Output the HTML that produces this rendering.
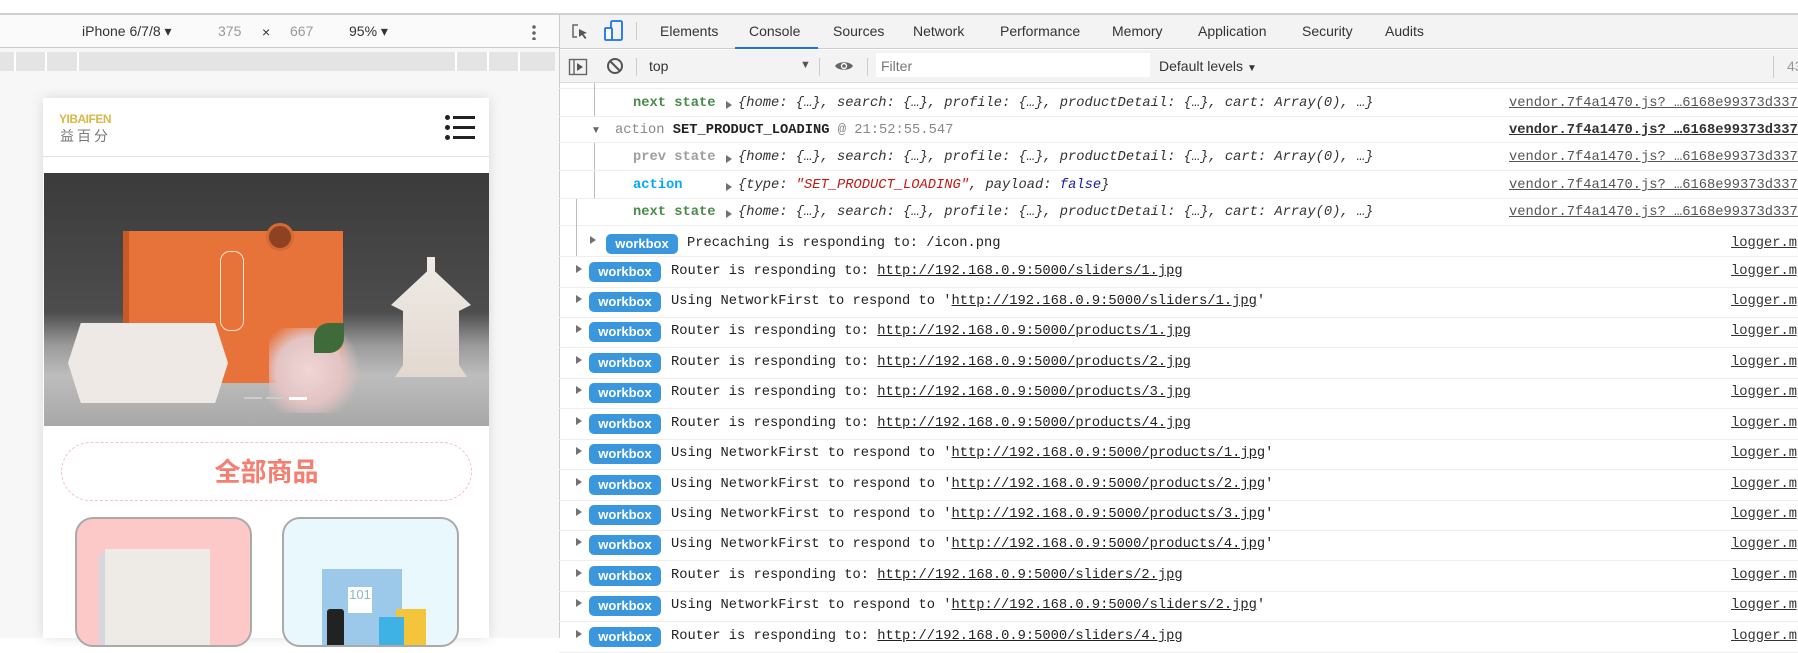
<!DOCTYPE html>
<html><head><meta charset="utf-8"><style>
*{margin:0;padding:0;box-sizing:border-box}
body{width:1798px;height:638px;overflow:hidden;background:#fff;position:relative;font-family:"Liberation Sans",sans-serif;font-size:13px;color:#333}
.a{position:absolute}
.mono{font-family:"Liberation Mono","DejaVu Sans Mono",monospace;font-size:13.75px;white-space:nowrap}
.tab{position:absolute;top:23px;font-size:14px;color:#333}
.row{position:absolute;left:559px;right:0;border-bottom:1px solid #eee}
.badge{position:absolute;height:20px;width:72px;background:#3a96dd;border-radius:5px;color:#fff;font-weight:bold;font-size:13px;line-height:20px;text-align:center;font-family:"Liberation Sans",sans-serif}
.tri{position:absolute;width:0;height:0;border-left:6px solid #727272;border-top:4px solid transparent;border-bottom:4px solid transparent}
.u{text-decoration:underline}
.it{font-style:italic}
.wr{position:absolute;left:559px;right:0;height:31px;border-bottom:1px solid #eee}
.wr .tri{left:17px;top:8px}
.wr .badge{left:30px;top:5px}
.wr .t{position:absolute;left:112px;top:7px;color:#222}
.wr .l{position:absolute;left:1172px;top:7px;color:#333}
</style></head><body>
<div class="a" style="left:0;top:0;width:1798px;height:13px;background:#fff"></div>
<div class="a" style="left:0;top:13px;width:1798px;height:2px;background:#d0d0d0"></div>
<div class="a" style="left:0;top:15px;width:559px;height:623px;background:#f7f7f7"></div>
<div class="a" style="left:0;top:15px;width:559px;height:33px;background:#fafafa;border-bottom:1px solid #ccc"></div>
<div class="a" style="left:82px;top:23px;font-size:14px;color:#333">iPhone 6/7/8 ▾</div>
<div class="a" style="left:218px;top:23px;font-size:14px;color:#999">375</div>
<div class="a" style="left:262px;top:24px;font-size:14px;color:#333">×</div>
<div class="a" style="left:290px;top:23px;font-size:14px;color:#999">667</div>
<div class="a" style="left:349px;top:23px;font-size:14px;color:#333">95% ▾</div>
<div class="a" style="left:532px;top:24px;width:4px;height:16px;background:radial-gradient(circle,#666 1.6px,transparent 2px) 0 0/4px 6px repeat-y"></div>
<div class="a" style="left:0;top:52px;width:555px;height:19px;background:#e4e4e4"></div>
<div class="a" style="left:14px;top:52px;width:2px;height:19px;background:#fff"></div>
<div class="a" style="left:45px;top:52px;width:2px;height:19px;background:#fff"></div>
<div class="a" style="left:77px;top:52px;width:2px;height:19px;background:#fff"></div>
<div class="a" style="left:455px;top:52px;width:2px;height:19px;background:#fff"></div>
<div class="a" style="left:487px;top:52px;width:2px;height:19px;background:#fff"></div>
<div class="a" style="left:518px;top:52px;width:2px;height:19px;background:#fff"></div>
<div class="a" style="left:43px;top:98px;width:446px;height:540px;background:#fff;box-shadow:0 0 12px rgba(0,0,0,.12)"></div>
<div class="a" style="left:59px;top:112px;font-size:12px;font-weight:bold;color:#d9b84a;letter-spacing:-0.5px">YIBAIFEN</div>
<div class="a" style="left:60px;top:126px;font-size:14px;color:#777;letter-spacing:3px;font-family:'Liberation Sans','Noto Sans CJK SC',sans-serif">益百分</div>
<div class="a" style="left:445px;top:115px;width:5px;height:5px;border-radius:50%;background:#222"></div>
<div class="a" style="left:445px;top:125px;width:5px;height:5px;border-radius:50%;background:#222"></div>
<div class="a" style="left:445px;top:135px;width:5px;height:5px;border-radius:50%;background:#222"></div>
<div class="a" style="left:453px;top:116px;width:22px;height:3px;background:#222"></div>
<div class="a" style="left:453px;top:126px;width:22px;height:3px;background:#222"></div>
<div class="a" style="left:453px;top:136px;width:22px;height:3px;background:#222"></div>
<div class="a" style="left:43px;top:156px;width:446px;height:1px;background:#e0e0e0"></div>
<div class="a" style="left:44px;top:173px;width:445px;height:253px;overflow:hidden;background:linear-gradient(180deg,#3b3b3b 0%,#4d4d4d 55%,#9a9a9a 68%,#bdbdbd 80%,#a8a8a8 100%)">
 <div class="a" style="left:85px;top:58px;width:214px;height:152px;background:#e8733a;box-shadow:-6px 0 0 #c85a26"></div>
 <div class="a" style="left:222px;top:50px;width:28px;height:28px;border-radius:50%;background:#8f4222;border:3px solid #d66a34"></div>
 <div class="a" style="left:176px;top:78px;width:24px;height:80px;border:1.5px solid #fbe1d0;border-radius:10px"></div>
 <div class="a" style="left:24px;top:150px;width:160px;height:80px;background:#efe9e6;clip-path:polygon(8% 0,92% 0,100% 50%,92% 100%,8% 100%,0 50%)"></div>
 <div class="a" style="left:225px;top:155px;width:100px;height:85px;background:radial-gradient(circle at 40% 50%,#f0d6d6 0,#e3c3c3 45%,transparent 70%)"></div>
 <div class="a" style="left:270px;top:150px;width:30px;height:30px;background:#3f6b3a;border-radius:50% 0"></div>
 <div class="a" style="left:347px;top:84px;width:80px;height:120px;background:linear-gradient(#f0ebe6,#e2d8d0);clip-path:polygon(45% 0,55% 0,55% 12%,100% 40%,85% 45%,85% 90%,95% 100%,5% 100%,15% 90%,15% 45%,0 40%,45% 12%)"></div>
 <div class="a" style="left:200px;top:224px;width:18px;height:2px;background:#ccc"></div>
 <div class="a" style="left:222px;top:224px;width:18px;height:2px;background:#ccc"></div>
 <div class="a" style="left:245px;top:224px;width:18px;height:3px;background:#fff"></div>
</div>
<div class="a" style="left:61px;top:442px;width:411px;height:59px;border:1px dashed #f3c2c2;border-radius:30px"></div>
<div class="a" style="left:61px;top:456px;width:411px;text-align:center;font-size:26px;font-weight:bold;color:#f47e70;font-family:'Liberation Sans','Noto Sans CJK SC',sans-serif;line-height:32px">全部商品</div>
<div class="a" style="left:75px;top:517px;width:177px;height:130px;border:2px solid #aaa;border-radius:18px;background:#fdc8c8;overflow:hidden">
 <div class="a" style="left:28px;top:30px;width:105px;height:100px;background:#eeeae6;box-shadow:-6px 4px 0 #d6d6de"></div>
</div>
<div class="a" style="left:282px;top:517px;width:177px;height:130px;border:2px solid #aaa;border-radius:18px;background:#e8f8fc;overflow:hidden">
 <div class="a" style="left:38px;top:50px;width:80px;height:80px;background:#9cc8ea"></div>
 <div class="a" style="left:64px;top:68px;width:24px;height:26px;background:#fff;color:#8bb;font-size:13px;text-align:center">101</div>
 <div class="a" style="left:112px;top:90px;width:30px;height:40px;background:#f4c53a"></div>
 <div class="a" style="left:95px;top:98px;width:25px;height:32px;background:#3fb2e5"></div>
 <div class="a" style="left:43px;top:90px;width:17px;height:40px;background:#222;border-radius:3px"></div>
</div>
<div class="a" style="left:559px;top:15px;width:1239px;height:623px;background:#fff;border-left:1px solid #ccc"></div>
<div class="a" style="left:560px;top:15px;width:1238px;height:34px;background:#f3f3f3;border-bottom:1px solid #ccc"></div>
<svg class="a" style="left:570px;top:22px" width="20" height="20" viewBox="0 0 20 20"><path d="M8 3H3v12h4" fill="none" stroke="#666" stroke-width="1.5"/><path d="M9 7l8 4-3.5 1 3 4-1.5 1-3-4L9 15z" fill="#555"/></svg>
<svg class="a" style="left:604px;top:20px" width="20" height="22" viewBox="0 0 20 22"><rect x="7" y="1" width="11" height="19" rx="1.5" fill="none" stroke="#1a73e8" stroke-width="1.8"/><rect x="1" y="8" width="7" height="12" rx="1" fill="#fff" stroke="#1a73e8" stroke-width="1.8"/></svg>
<div class="a" style="left:636px;top:22px;width:1px;height:18px;background:#ccc"></div>
<div class="tab" style="left:660px">Elements</div>
<div class="tab" style="left:749px">Console</div>
<div class="a" style="left:735px;top:47px;width:83px;height:2px;background:#1a73e8"></div>
<div class="tab" style="left:833px">Sources</div>
<div class="tab" style="left:913px">Network</div>
<div class="tab" style="left:1000px">Performance</div>
<div class="tab" style="left:1112px">Memory</div>
<div class="tab" style="left:1198px">Application</div>
<div class="tab" style="left:1302px">Security</div>
<div class="tab" style="left:1385px">Audits</div>
<div class="a" style="left:560px;top:50px;width:1238px;height:33px;background:#f3f3f3;border-bottom:1px solid #ddd"></div>
<svg class="a" style="left:568px;top:57px" width="20" height="20" viewBox="0 0 20 20"><rect x="1.5" y="2.5" width="17" height="15" fill="none" stroke="#666" stroke-width="1.4"/><line x1="6" y1="2.5" x2="6" y2="17.5" stroke="#666" stroke-width="1.4"/><path d="M9 6l6 4-6 4z" fill="#555"/></svg>
<svg class="a" style="left:606px;top:57px" width="18" height="18" viewBox="0 0 18 18"><circle cx="9" cy="9" r="7" fill="none" stroke="#555" stroke-width="2"/><line x1="4" y1="4" x2="14" y2="14" stroke="#555" stroke-width="2"/></svg>
<div class="a" style="left:636px;top:58px;width:1px;height:18px;background:#ccc"></div>
<div class="a" style="left:649px;top:58px;font-size:14px;color:#333">top</div>
<div class="a" style="left:800px;top:59px;font-size:11px;color:#555">▼</div>
<div class="a" style="left:819px;top:58px;width:1px;height:18px;background:#ccc"></div>
<svg class="a" style="left:834px;top:59px" width="20" height="14" viewBox="0 0 20 14"><path d="M1 7C4 2 16 2 19 7 16 12 4 12 1 7z" fill="#666"/><circle cx="10" cy="7" r="3.2" fill="#fff"/><circle cx="10" cy="7" r="1.8" fill="#666"/></svg>
<div class="a" style="left:867px;top:58px;width:1px;height:18px;background:#ccc"></div>
<div class="a" style="left:876px;top:53px;width:274px;height:24px;background:#fff"></div>
<div class="a" style="left:881px;top:58px;font-size:14px;color:#777">Filter</div>
<div class="a" style="left:1159px;top:58px;font-size:14px;color:#333">Default levels <span style="font-size:10px">▼</span></div>
<div class="a" style="left:1773px;top:56px;width:1px;height:22px;background:#ccc"></div>
<div class="a" style="left:1787px;top:58px;font-size:14px;color:#999">43</div>
<div class="row" style="top:83px;height:6px"></div>
<div class="a" style="left:594px;top:83px;width:1px;height:34px;background:#bbb"></div>
<div class="a" style="left:594px;top:143px;width:1px;height:56px;background:#bbb"></div>
<div class="row" style="top:89px;height:28px"></div>
<div class="row" style="top:117px;height:26px"></div>
<div class="row" style="top:143px;height:28px"></div>
<div class="row" style="top:171px;height:28px"></div>
<div class="row" style="top:199px;height:27px"></div>
<div class="a mono" style="left:633px;top:96px;color:#4a8a4a;font-weight:bold">next state</div>
<div class="tri" style="left:726px;top:101px"></div>
<div class="a mono it" style="left:738px;top:96px">{home: {…}, search: {…}, profile: {…}, productDetail: {…}, cart: Array(0), …}</div>
<div class="a mono u" style="left:1509px;top:96px;color:#555">vendor.7f4a1470.js?_…6168e99373d337</div>
<div class="a" style="left:591px;top:125px;font-size:10px;color:#666">▼</div>
<div class="a mono" style="left:615px;top:123px;color:#888">action <b style="color:#222">SET_PRODUCT_LOADING</b> @ 21:52:55.547</div>
<div class="a mono u" style="left:1509px;top:123px;color:#333;font-weight:bold">vendor.7f4a1470.js?_…6168e99373d337</div>
<div class="a mono" style="left:633px;top:150px;color:#9e9e9e;font-weight:bold">prev state</div>
<div class="tri" style="left:726px;top:155px"></div>
<div class="a mono it" style="left:738px;top:150px">{home: {…}, search: {…}, profile: {…}, productDetail: {…}, cart: Array(0), …}</div>
<div class="a mono u" style="left:1509px;top:150px;color:#555">vendor.7f4a1470.js?_…6168e99373d337</div>
<div class="a mono" style="left:633px;top:178px;color:#03a9f4;font-weight:bold">action</div>
<div class="tri" style="left:726px;top:183px"></div>
<div class="a mono it" style="left:738px;top:178px">{type: <span style="color:#c41a16">"SET_PRODUCT_LOADING"</span>, payload: <span style="color:#1a1aa6">false</span>}</div>
<div class="a mono u" style="left:1509px;top:178px;color:#555">vendor.7f4a1470.js?_…6168e99373d337</div>
<div class="a mono" style="left:633px;top:205px;color:#4a8a4a;font-weight:bold">next state</div>
<div class="tri" style="left:726px;top:210px"></div>
<div class="a mono it" style="left:738px;top:205px">{home: {…}, search: {…}, profile: {…}, productDetail: {…}, cart: Array(0), …}</div>
<div class="a mono u" style="left:1509px;top:205px;color:#555">vendor.7f4a1470.js?_…6168e99373d337</div>
<div class="a" style="left:576px;top:199px;width:1px;height:58px;background:#bbb"></div>
<div class="row" style="top:226px;height:31px"></div>
<div class="tri" style="left:590px;top:236px"></div>
<div class="badge" style="left:606px;top:234px">workbox</div>
<div class="a mono" style="left:687px;top:236px;color:#222">Precaching is responding to: /icon.png</div>
<div class="a mono u" style="left:1731px;top:236px;color:#333">logger.mjs</div>
<div class="wr mono" style="top:257px"><div class="tri"></div><div class="badge">workbox</div><div class="t">Router is responding to: <span class="u">http://192.168.0.9:5000/sliders/1.jpg</span></div><div class="l u">logger.mjs</div></div>
<div class="wr mono" style="top:287px"><div class="tri"></div><div class="badge">workbox</div><div class="t">Using NetworkFirst to respond to '<span class="u">http://192.168.0.9:5000/sliders/1.jpg</span>'</div><div class="l u">logger.mjs</div></div>
<div class="wr mono" style="top:317px"><div class="tri"></div><div class="badge">workbox</div><div class="t">Router is responding to: <span class="u">http://192.168.0.9:5000/products/1.jpg</span></div><div class="l u">logger.mjs</div></div>
<div class="wr mono" style="top:348px"><div class="tri"></div><div class="badge">workbox</div><div class="t">Router is responding to: <span class="u">http://192.168.0.9:5000/products/2.jpg</span></div><div class="l u">logger.mjs</div></div>
<div class="wr mono" style="top:378px"><div class="tri"></div><div class="badge">workbox</div><div class="t">Router is responding to: <span class="u">http://192.168.0.9:5000/products/3.jpg</span></div><div class="l u">logger.mjs</div></div>
<div class="wr mono" style="top:409px"><div class="tri"></div><div class="badge">workbox</div><div class="t">Router is responding to: <span class="u">http://192.168.0.9:5000/products/4.jpg</span></div><div class="l u">logger.mjs</div></div>
<div class="wr mono" style="top:439px"><div class="tri"></div><div class="badge">workbox</div><div class="t">Using NetworkFirst to respond to '<span class="u">http://192.168.0.9:5000/products/1.jpg</span>'</div><div class="l u">logger.mjs</div></div>
<div class="wr mono" style="top:470px"><div class="tri"></div><div class="badge">workbox</div><div class="t">Using NetworkFirst to respond to '<span class="u">http://192.168.0.9:5000/products/2.jpg</span>'</div><div class="l u">logger.mjs</div></div>
<div class="wr mono" style="top:500px"><div class="tri"></div><div class="badge">workbox</div><div class="t">Using NetworkFirst to respond to '<span class="u">http://192.168.0.9:5000/products/3.jpg</span>'</div><div class="l u">logger.mjs</div></div>
<div class="wr mono" style="top:530px"><div class="tri"></div><div class="badge">workbox</div><div class="t">Using NetworkFirst to respond to '<span class="u">http://192.168.0.9:5000/products/4.jpg</span>'</div><div class="l u">logger.mjs</div></div>
<div class="wr mono" style="top:561px"><div class="tri"></div><div class="badge">workbox</div><div class="t">Router is responding to: <span class="u">http://192.168.0.9:5000/sliders/2.jpg</span></div><div class="l u">logger.mjs</div></div>
<div class="wr mono" style="top:591px"><div class="tri"></div><div class="badge">workbox</div><div class="t">Using NetworkFirst to respond to '<span class="u">http://192.168.0.9:5000/sliders/2.jpg</span>'</div><div class="l u">logger.mjs</div></div>
<div class="wr mono" style="top:622px"><div class="tri"></div><div class="badge">workbox</div><div class="t">Router is responding to: <span class="u">http://192.168.0.9:5000/sliders/4.jpg</span></div><div class="l u">logger.mjs</div></div>
</body></html>
